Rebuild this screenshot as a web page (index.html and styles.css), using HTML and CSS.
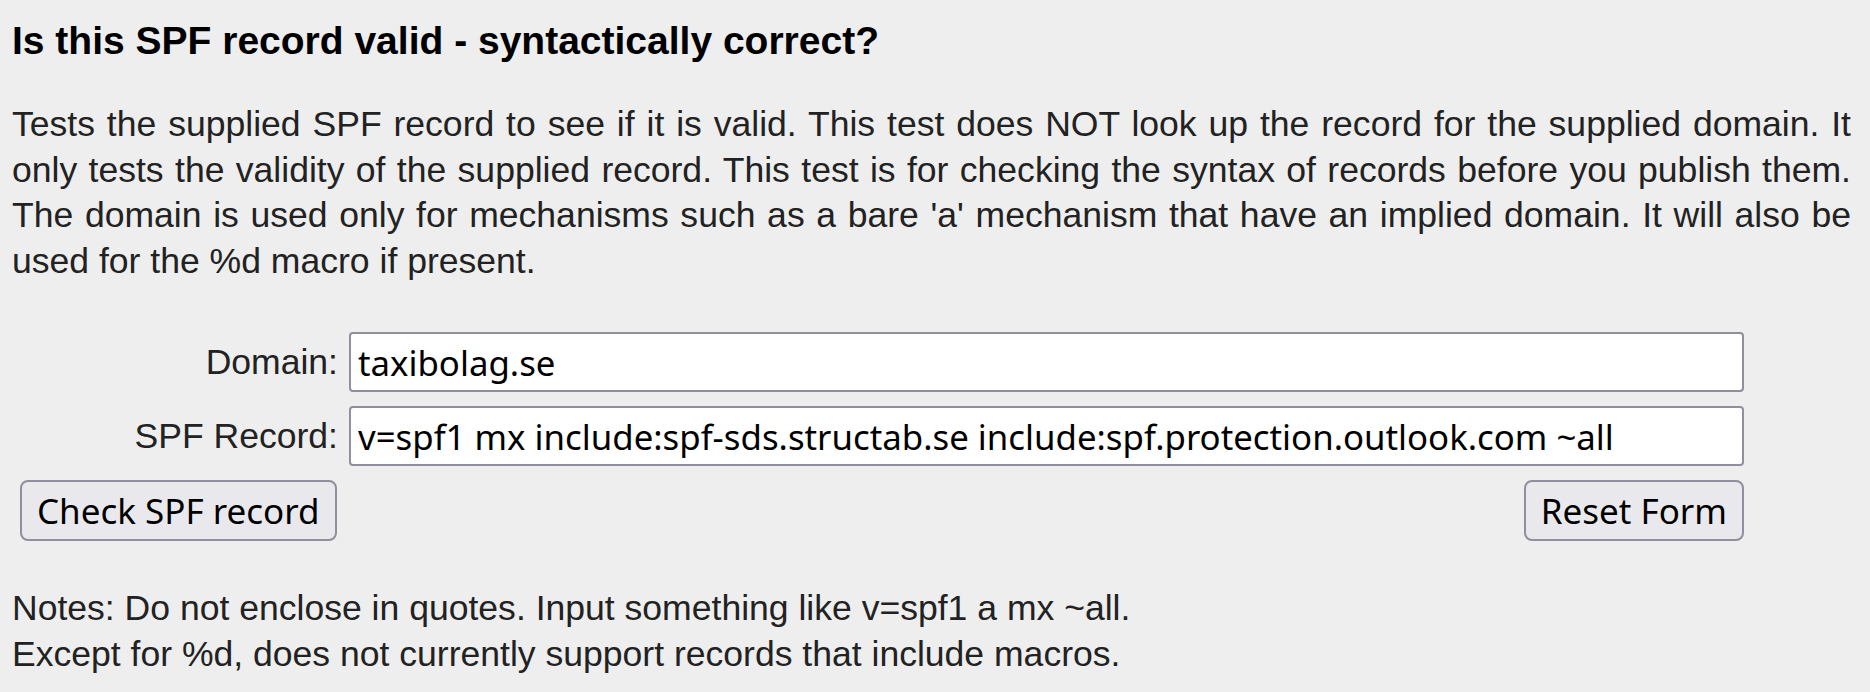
FILE: index.html
```html
<!DOCTYPE html>
<html lang="en">
<head>
<meta charset="utf-8">
<title>SPF record syntax check</title>
<link rel="stylesheet" href="styles.css">
</head>
<body>
<main class="page">
  <h3 class="title">Is this SPF record valid - syntactically correct?</h3>
  <p class="intro">Tests the supplied SPF record to see if it is valid. This test does NOT look up the record for the supplied domain. It only tests the validity of the supplied record. This test is for checking the syntax of records before you publish them. The domain is used only for mechanisms such as a bare 'a' mechanism that have an implied domain. It will also be used for the %d macro if present.</p>
  <form class="spf-form">
    <label class="field-label" for="domain">Domain:</label>
    <input class="field-input" id="domain" type="text" value="taxibolag.se">
    <label class="field-label" for="spf">SPF Record:</label>
    <input class="field-input" id="spf" type="text" value="v=spf1 mx include:spf-sds.structab.se include:spf.protection.outlook.com ~all">
    <button type="button" class="btn btn-check">Check SPF record</button>
    <button type="reset" class="btn btn-reset">Reset Form</button>
  </form>
  <p class="notes">Notes: Do not enclose in quotes. Input something like v=spf1 a mx ~all.<br>Except for %d, does not currently support records that include macros.</p>
</main>
</body>
</html>
```
FILE: styles.css
```css
html, body {
  margin: 0;
  padding: 0;
  background: #eeeeee;
}

body {
  font-family: "Liberation Sans", Arial, sans-serif;
  font-size: 35.55px;
  line-height: 45.5px;
  color: #222222;
}

.page {
  padding: 0 19px 0 12px;
}

.title {
  margin: 19px 0 0;
  font-size: 39px;
  line-height: 43px;
  font-weight: bold;
  color: #000000;
}

.intro {
  margin: 40px 0 0;
  text-align: justify;
}

.spf-form {
  display: grid;
  grid-template-columns: 318px 1395px;
  column-gap: 11px;
  row-gap: 14px;
  margin: 48px 0 0 8px;
  align-items: center;
}

.field-label {
  text-align: right;
  line-height: 40px;
}

.field-input {
  box-sizing: border-box;
  height: 60px;
  width: 100%;
  margin: 0;
  padding: 0 7px;
  border: 2px solid #8f8f9d;
  border-radius: 4px;
  background: #ffffff;
  color: #000000;
  font-family: "Noto Sans", "Open Sans", sans-serif;
  font-size: 34.8px;
}

.btn {
  box-sizing: border-box;
  height: 61px;
  margin: 0;
  padding: 0 15px;
  border: 2px solid #8f8f9d;
  border-radius: 8px;
  background: #e9e9ed;
  color: #000000;
  font-family: "Noto Sans", "Open Sans", sans-serif;
  font-size: 35px;
}

.btn-check {
  justify-self: start;
}

.btn-reset {
  justify-self: end;
}

.notes {
  margin: 45px 0 0;
}
```
